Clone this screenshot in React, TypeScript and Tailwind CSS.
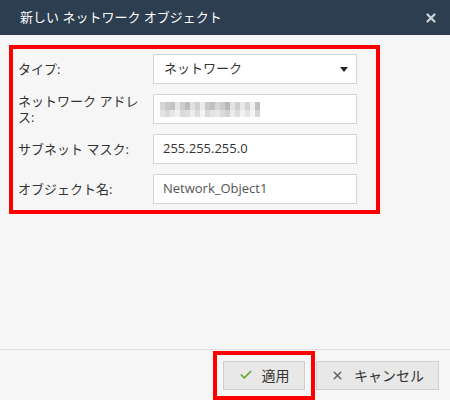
import { Check, X } from 'lucide-react';

// blurred address pixels (two rows of mosaic blocks)
const BLUR_TOP = ['#d6d6d6','#c9c9c9','#c3c3c3','#e6e6e6','#cdcdcd','#bcbcbc','#e0e0e0','#d0d0d0','#ececec','#c8c8c8','#c0c0c0','#d6d6d6','#cbcbcb','#b8b8b8','#e3e3e3','#cfcfcf','#e9e9e9','#d3d3d3','#f0f0f0','#c0c0c0'];
const BLUR_BOT = ['#e2e2e2','#d8d8d8','#e6e6e6','#f0f0f0','#dadada','#dedede','#ededed','#dcdcdc','#f3f3f3','#d9d9d9','#e3e3e3','#e7e7e7','#dbdbdb','#d2d2d2','#ececec','#dddddd','#f2f2f2','#e4e4e4','#f4f4f4','#d5d5d5'];

const font = { fontFamily: '"Open Sans", "Noto Sans CJK JP", sans-serif' };

function Row({ label, children }: { label: string; children: React.ReactNode }) {
  return (
    <div className="flex items-center h-[30px]">
      <div className="w-[135px] pr-[8px] text-[13px] leading-[16px] text-[#333]">{label}</div>
      <div className="w-[204px] h-[30px]">{children}</div>
    </div>
  );
}

export default function App() {
  return (
    <div className="w-[450px] h-[400px] flex flex-col bg-[#f6f6f6]" style={font}>
      {/* Header */}
      <div className="h-[35px] bg-[#2d3e50] flex items-center justify-between pl-[20px] pr-[12px]">
        <span className="text-[13px] text-white">新しい ネットワーク オブジェクト</span>
        <X size={14} strokeWidth={4} className="text-[#c9d0d8]" />
      </div>

      {/* Body */}
      <div className="flex-1 pt-[10px] pl-[9px]">
        <div className="w-[371px] border-4 border-[#ff0000] pt-[5px] pb-[6px] pl-[5px] flex flex-col gap-[10px]">
          <Row label="タイプ:">
            <div className="h-full bg-white border border-[#d4d4d4] flex items-center justify-between pl-[10px] pr-[8px] text-[13px] text-[#333]">
              <span>ネットワーク</span>
              <svg width="8" height="5" viewBox="0 0 8 5"><path d="M0 0h8L4 5z" fill="#222" /></svg>
            </div>
          </Row>
          <Row label="ネットワーク アドレス:">
            <div className="h-full bg-white border border-[#d4d4d4] flex items-center pl-[6px]">
              <div className="flex flex-col">
                <div className="flex">
                  {BLUR_TOP.map((c, i) => <span key={i} className="w-[5px] h-[8px]" style={{ backgroundColor: c }} />)}
                </div>
                <div className="flex">
                  {BLUR_BOT.map((c, i) => <span key={i} className="w-[5px] h-[7px]" style={{ backgroundColor: c }} />)}
                </div>
              </div>
            </div>
          </Row>
          <Row label="サブネット マスク:">
            <div className="h-full bg-white border border-[#d4d4d4] flex items-center pl-[9px] text-[13px] text-[#333]">255.255.255.0</div>
          </Row>
          <Row label="オブジェクト名:">
            <div className="h-full bg-white border border-[#d4d4d4] flex items-center pl-[9px] text-[13px] text-[#555]">Network_Object1</div>
          </Row>
        </div>
      </div>

      {/* Footer */}
      <div className="h-[51px] border-t border-[#dedede] flex items-center justify-end pr-[11px] gap-[1px]">
        <div className="border-4 border-[#ff0000] p-[6px]">
          <button className="w-[82px] h-[29px] bg-[#e8e8e8] border border-[#cfcfcf] flex items-center justify-center gap-[9px] text-[14px] text-[#333]">
            <Check size={14} strokeWidth={3} className="text-[#6aa82f]" />
            <span>適用</span>
          </button>
        </div>
        <button className="w-[123px] h-[29px] bg-[#e8e8e8] border border-[#cfcfcf] flex items-center justify-center gap-[10px] text-[14px] text-[#333]">
          <X size={13} strokeWidth={3} className="text-[#666]" />
          <span>キャンセル</span>
        </button>
      </div>
    </div>
  );
}
